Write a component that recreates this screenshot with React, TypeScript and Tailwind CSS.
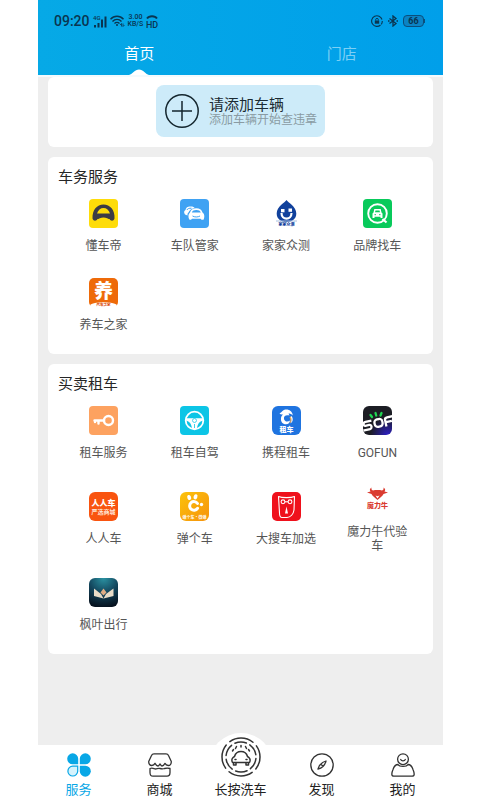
import type { ReactNode } from "react";

type Service = {
  name: string;
  icon: ReactNode;
};

type Tab = {
  name: string;
  icon: ReactNode;
};

const cjk = "'Noto Sans CJK SC', sans-serif";

function Tile(props: { fill: string; radius?: number; children: ReactNode }) {
  return (
    <svg viewBox="0 0 29 29" className="size-[29px] overflow-visible" aria-hidden="true">
      <rect width="29" height="29" rx={props.radius ?? 4} fill={props.fill} />
      {props.children}
    </svg>
  );
}

const carServices: Service[] = [
  {
    name: "懂车帝",
    icon: (
      <Tile fill="#fedc09">
        <path
          d="M3.500 19.500C3 11 8 5.500 14.500 5.500S26 11 25.500 19.500C24.500 22.500 21.500 22 20.500 20H8.500C7.500 22 4.500 22.500 3.500 19.500Z"
          fill="#3c3b45"
        />
        <path d="M8 14.500C9 11 11.500 9 14.500 9S20 11 21 14.500Z" fill="#fedc09" />
        <path d="M8.500 21C10 17.500 19 17.500 20.500 21Z" fill="#fedc09" />
      </Tile>
    ),
  },
  {
    name: "车队管家",
    icon: (
      <Tile fill="#3fa2f3">
        <path
          d="M5 15.500C3.500 13.500 4 11.500 5.500 11C6.500 7.500 8.500 7.500 11 7.500C13 7.500 14 8 14.500 9C11 9.500 9.500 11.500 8.500 13.500C7.500 14 7.500 15 7.500 16.500Z"
          fill="#fff"
        />
        <path d="M7 11C7.500 9.500 9 9.200 11.500 9.200" stroke="#3fa2f3" fill="none" />
        <path
          d="M10 13.500C11 10.500 13 9.300 16.300 9.300S21.500 10.500 22.500 13.500C25 15 24.500 19 23.500 20.800H21.500L20.500 19.800H12L11 20.800H9.500C8 18.500 8 15 10 13.500Z"
          fill="#fff"
        />
        <path d="M11.800 13.500C12.500 11.500 14 10.900 16.300 10.900S20 11.500 20.800 13.500Z" fill="#3fa2f3" />
        <path d="M12.500 17C14.500 18.300 18 18.300 20 17" stroke="#3fa2f3" fill="none" />
      </Tile>
    ),
  },
  {
    name: "家家众测",
    icon: (
      <Tile fill="#fff">
        <path
          d="M14.500 1C16 3.500 24.300 7.500 24.300 14.500C24.300 20 20 23 14.500 23S4.700 20 4.700 14.500C4.700 7.500 13 3.500 14.500 1Z"
          fill="#11419c"
        />
        <rect x="9" y="10" width="3.500" height="3.300" fill="#fff" />
        <rect x="16.500" y="9.500" width="3.500" height="3.300" fill="#fff" />
        <path d="M9.500 14C9.500 21.500 19.500 21.500 19.500 14" stroke="#fff" strokeWidth="2.200" fill="none" />
        <path d="M4 22H25" stroke="#a9bfe0" strokeWidth="1" />
        <text x="14.500" y="27" fontSize="4" fontWeight="900" fill="#11419c" textAnchor="middle" fontFamily={cjk}>
          家家众测
        </text>
      </Tile>
    ),
  },
  {
    name: "品牌找车",
    icon: (
      <Tile fill="#08ca5b">
        <circle cx="14.500" cy="14.500" r="9.300" stroke="#fff" strokeWidth="1.900" fill="none" />
        <path d="M19.500 20L23.500 23.500" stroke="#fff" strokeWidth="2.200" />
        <path
          d="M11.300 10H17.700L18.500 13.500L19.500 14.500V19H17.500V17.800H11.500V19H9.500V14.500L10.500 13.500Z"
          fill="#fff"
        />
        <path d="M12.500 11.500H16.500L17 13.300H12Z" fill="#08ca5b" />
        <path d="M11.500 15.700H13M16 15.700H17.500" stroke="#08ca5b" />
      </Tile>
    ),
  },
  {
    name: "养车之家",
    icon: (
      <Tile fill="#ee6a09" radius={5}>
        <path d="M1 29L1.500 26.500C7 23.500 22 23.500 27.500 26.500L28 29Z" fill="#fff" />
        <text x="14.500" y="20" fontSize="19" fontWeight="900" fill="#fff" textAnchor="middle" fontFamily={cjk}>
          养
        </text>
        <text x="14.500" y="28" fontSize="3.600" fontWeight="900" fill="#d9480a" textAnchor="middle" fontFamily={cjk}>
          汽车之家
        </text>
      </Tile>
    ),
  },
];

const rentalServices: Service[] = [
  {
    name: "租车服务",
    icon: (
      <Tile fill="#fda260">
        <circle cx="19.500" cy="14.500" r="4.500" stroke="#fff" strokeWidth="2.400" fill="none" />
        <path d="M15 14.500H5.500M6 14.500V16M9.500 14.500V17.500" stroke="#fff" strokeWidth="2.400" strokeLinecap="round" />
      </Tile>
    ),
  },
  {
    name: "租车自驾",
    icon: (
      <Tile fill="#0cc5e6">
        <circle cx="14.500" cy="14.500" r="8.800" stroke="#fff" strokeWidth="1.800" fill="none" />
        <path
          d="M6 12.300H23V14.500C19.500 15.500 17.500 17.500 17 23H12C11.500 17.500 9.500 15.500 6 14.500Z"
          fill="#fff"
        />
        <circle cx="14.500" cy="14.500" r="2" stroke="#0cc5e6" strokeWidth="0.700" fill="none" />
        <path d="M14.500 18V22" stroke="#0cc5e6" strokeWidth="0.800" />
      </Tile>
    ),
  },
  {
    name: "携程租车",
    icon: (
      <Tile fill="#1f74e0" radius={6}>
        <path
          d="M7.500 7.500C8.500 6.500 9.500 6.500 10 5.500C11 3.800 13.500 3.200 15.500 3.500C18.500 4 20.500 6 20.800 9.500C19.500 8 18 7.500 16.500 7.500L17.500 9.500C13.500 8.500 11.500 10.500 12 13C12.500 15.500 15.500 16.500 18 14.500C17.800 16.500 16.500 18.300 14 18.300C10.500 18.300 8.500 15.500 9 12C9.200 10.500 10 9.300 11 8.500C9.500 8.800 8.200 8.500 7.500 7.500Z"
          fill="#fff"
        />
        <path d="M18.500 10.500C20.500 12 20.500 15.500 17.500 17.500C18.500 15.500 18.800 13 17.500 11.500Z" fill="#f6a340" />
        <path d="M19.500 10C21.500 12.500 21 16 18.500 17.500C19.800 15.500 20 12.500 18.500 11Z" fill="#fff" />
        <text x="14.500" y="26" fontSize="7" fontWeight="900" fill="#fff" textAnchor="middle" fontFamily={cjk}>
          租车
        </text>
      </Tile>
    ),
  },
  {
    name: "GOFUN",
    icon: (
      <svg viewBox="0 0 29 29" className="size-[29px]" aria-hidden="true">
        <defs>
          <radialGradient id="gofun" cx="0.85" cy="1" r="0.6">
            <stop offset="0" stopColor="#2d1fc4" />
            <stop offset="1" stopColor="#1c1d24" />
          </radialGradient>
          <clipPath id="gofunTile">
            <rect width="29" height="29" rx="6" />
          </clipPath>
        </defs>
        <g clipPath="url(#gofunTile)">
          <rect width="29" height="29" fill="url(#gofun)" />
          <g stroke="#20d653" strokeWidth="2.300" strokeLinecap="round">
            <path d="M7.500 9L9 11M12.500 7L13.200 9.500M18.500 7L17.500 9.500" />
          </g>
          <g stroke="#fff" strokeWidth="2.300" fill="none" transform="rotate(-12 14 17)">
            <path d="M9 13.500H3C0 13.500 0 17.300 2 17.300H6C9 17.300 8 21.500 6 21.500H-1" />
            <rect x="11.500" y="13.500" width="8" height="7.500" rx="3" />
            <path d="M22.500 22.500V16C22.500 14 23.500 13.500 25 13.500H31M23 18H29" />
          </g>
        </g>
      </svg>
    ),
  },
  {
    name: "人人车",
    icon: (
      <Tile fill="#f9540f" radius={6}>
        <text x="14.500" y="13.500" fontSize="8" fontWeight="900" fill="#fff" textAnchor="middle" fontFamily={cjk}>
          人人车
        </text>
        <text x="14.500" y="21.500" fontSize="6" fontWeight="700" fill="#ffe7d8" textAnchor="middle" fontFamily={cjk}>
          严选商城
        </text>
      </Tile>
    ),
  },
  {
    name: "弹个车",
    icon: (
      <svg viewBox="0 0 29 29" className="size-[29px] overflow-visible" aria-hidden="true">
        <defs>
          <linearGradient id="tange" x1="0" y1="0" x2="1" y2="1">
            <stop offset="0" stopColor="#fcc30b" />
            <stop offset="1" stopColor="#f6920c" />
          </linearGradient>
        </defs>
        <rect width="29" height="29" rx="6" fill="url(#tange)" />
        <path
          d="M17.500 11.500A4.300 4.300 0 1 0 17.500 16.300"
          stroke="#fff"
          strokeWidth="3"
          strokeLinecap="round"
          fill="none"
        />
        <ellipse cx="9.200" cy="5.500" rx="1.900" ry="2.600" fill="#fff" transform="rotate(-20 9.200 5.500)" />
        <ellipse cx="15.500" cy="4.800" rx="1.900" ry="2.600" fill="#fff" transform="rotate(20 15.500 4.800)" />
        <circle cx="21.500" cy="12.500" r="1.700" fill="#fff" />
        <text x="14.500" y="26.500" fontSize="4" fontWeight="700" fill="#fff" textAnchor="middle" fontFamily={cjk}>
          弹个车·微弹
        </text>
      </svg>
    ),
  },
  {
    name: "大搜车加选",
    icon: (
      <Tile fill="#ef111c" radius={5}>
        <g stroke="#fff" fill="none" strokeWidth="1.100" strokeLinejoin="round">
          <path d="M6.500 4.500C10 6 19 6 22.500 4.500L22 18C21.500 22 18.500 25.500 15 25.500H10C8 25.500 7.500 23.500 7.500 21Z" />
          <circle cx="11" cy="9.800" r="1.900" />
          <circle cx="18" cy="9.800" r="1.900" />
          <path d="M13 9.800H16" />
        </g>
        <path d="M14.500 14.500L13 21.500H16Z" fill="#fff" />
      </Tile>
    ),
  },
  {
    name: "魔力牛代验车",
    icon: (
      <Tile fill="#fff">
        <path
          d="M8.500 2.500C8.200 4 8.500 5 10 5.500L12 5H17L19 5.500C20.500 5 20.800 4 20.500 2.500C22.500 3.500 22.500 5.500 21.500 6.500L25 7.500L20.500 9C19.500 11 17.500 12.500 14.500 15C11.500 12.500 9.500 11 8.500 9L4 7.500L7.500 6.500C6.500 5.500 6.500 3.500 8.500 2.500Z"
          fill="#da3b30"
        />
        <path d="M12.500 10.500L14.500 13.500L16.500 10.500L14.500 11.300Z" fill="#fff" />
        <text x="14.500" y="23" fontSize="7" fontWeight="900" fill="#da3b30" textAnchor="middle" fontFamily={cjk}>
          魔力牛
        </text>
      </Tile>
    ),
  },
  {
    name: "枫叶出行",
    icon: (
      <svg viewBox="0 0 29 29" className="size-[29px]" aria-hidden="true">
        <defs>
          <radialGradient id="maple" cx="0.5" cy="0" r="1">
            <stop offset="0" stopColor="#2b93a3" />
            <stop offset="0.5" stopColor="#14485f" />
            <stop offset="1" stopColor="#06121f" />
          </radialGradient>
        </defs>
        <rect width="29" height="29" rx="6" fill="url(#maple)" />
        <path d="M5 10.500L12 16L14.500 20.500L5 18Z" fill="#e9dcc8" />
        <path d="M24.500 10.500L17 16L14.500 20.500L24.500 18Z" fill="#e9dcc8" />
        <path d="M14.500 10.500L17.500 14.500L14.500 17.500L11.500 14.500Z" fill="#e0ad85" />
      </svg>
    ),
  },
];

const tabs: Tab[] = [
  {
    name: "服务",
    icon: (
      <svg viewBox="0 0 24 24" className="size-6" fill="#08a7e6" aria-hidden="true">
        <path d="M5.700 0.300A5.500 5.500 0 0 1 11.200 5.800V11.300H5.700A5.500 5.500 0 0 1 5.700 0.300Z" />
        <path d="M18.300 0.300A5.500 5.500 0 0 1 18.300 11.300H12.800V5.800A5.500 5.500 0 0 1 18.300 0.300Z" />
        <path d="M12.800 12.700H18.300A5.500 5.500 0 1 1 12.800 18.200Z" />
        <path
          d="M10.700 13.200V18.200A4.900 4.900 0 1 1 5.700 13.200Z"
          fill="#d5f3fd"
          stroke="#08a7e6"
          strokeWidth="1.200"
        />
      </svg>
    ),
  },
  {
    name: "商城",
    icon: (
      <svg
        viewBox="0 0 24 24"
        className="size-6"
        fill="none"
        stroke="#333"
        strokeWidth="1.300"
        strokeLinejoin="round"
        aria-hidden="true"
      >
        <path d="M6 0.800H18C19.300 0.800 20 1.300 20.500 2.500L23.300 8.500C23.300 11 22 12.500 20.300 12.500C18.500 12.500 17.500 11.500 17 10.300C16 12 15 13 14 13C13 13 12.500 11.500 12 11C11.500 11.500 11 13 10 13C9 13 8 12 7 10.300C6.500 11.500 5.500 12.500 3.700 12.500C2 12.500 0.700 11 0.700 8.500L3.500 2.500C4 1.300 4.700 0.800 6 0.800Z" />
        <path d="M2 15.500C5 14.500 6 16 7.500 16C9 16 10 15 12 15.500C14 16 15 16 16.500 15.500C18.500 15 20 15 22 15.500V19.500C22 22 21 23.200 19 23.200H5C3 23.200 2 22 2 19.500Z" />
      </svg>
    ),
  },
  {
    name: "长按洗车",
    icon: (
      <svg
        viewBox="0 0 40 40"
        className="size-10"
        fill="none"
        stroke="#333"
        strokeWidth="1.500"
        strokeLinecap="round"
        aria-hidden="true"
      >
        <circle cx="20" cy="20" r="19" pathLength="120" strokeDasharray="25 5" strokeDashoffset="12" />
        <circle cx="20" cy="20" r="15" pathLength="120" strokeDasharray="15 5" strokeDashoffset="-2" />
        <path d="M15.500 9.500L14.500 11.500M20 8.500V10M24.500 9.500L25.500 11.500M12.500 12.500L11.500 14M27.500 12.500L28.500 14" />
        <path
          d="M11.500 25.500H28.500C30 22.500 28.500 20.500 26.500 19.500C25.500 16 24 14.500 20 14.500S14.500 16 13.500 19.500C11.500 20.500 10 22.500 11.500 25.500ZM12.500 26V28H15V26M25 26V28H27.500V26"
          strokeLinejoin="round"
        />
        <path d="M14 22.500H15M25 22.500H26" />
      </svg>
    ),
  },
  {
    name: "发现",
    icon: (
      <svg viewBox="0 0 24 24" className="size-6" fill="none" stroke="#333" strokeWidth="1.300" aria-hidden="true">
        <circle cx="12" cy="12" r="11.200" />
        <path d="M16 8C15 12 13 15 8 16C9 12 11 9.500 16 8ZM11 11.500L13 13" strokeLinejoin="round" />
      </svg>
    ),
  },
  {
    name: "我的",
    icon: (
      <svg viewBox="0 0 24 24" className="size-6" fill="none" stroke="#333" strokeWidth="1.300" aria-hidden="true">
        <circle cx="12" cy="6.200" r="5.400" />
        <path d="M9.700 6.500C10.500 8.200 13.500 8.200 14.300 6.500" strokeLinecap="round" />
        <path
          d="M7 11.500C4 11.500 3 13.500 2 16.500C0.500 20 0 23.200 3 23.200H21C24 23.200 23.500 20 22 16.500C21 13.500 20 11.500 17 11.500C15.500 14 8.500 14 7 11.500Z"
          strokeLinejoin="round"
        />
      </svg>
    ),
  },
];

function StatusBar() {
  return (
    <div className="flex h-[42px] items-center justify-between pr-[18px] pl-4 font-[Roboto] text-[#0a3550]">
      <div className="flex items-center gap-[3px]">
        <span className="text-sm font-medium">09:20</span>
        <svg viewBox="0 0 14 13" className="h-[13px] w-[14px] overflow-visible" fill="currentColor" aria-hidden="true">
          <text x="0" y="5" fontSize="6" fontWeight="500" fontFamily="Roboto">
            4G
          </text>
          <rect x="1" y="10" width="2" height="2.500" />
          <rect x="4.500" y="8" width="2" height="4.500" />
          <rect x="8" y="4.500" width="2" height="8" />
          <rect x="11.500" y="1.500" width="2" height="11" />
        </svg>
        <svg
          viewBox="0 0 15 12"
          className="h-3 w-[15px]"
          fill="none"
          stroke="currentColor"
          strokeWidth="1.400"
          aria-hidden="true"
        >
          <path d="M0.500 4.300C4 0.300 10 0.300 13.500 4.300M2.500 6.500C5 3.700 9 3.700 11.500 6.500M4.500 8.500C6 7 8 7 9.500 8.500" />
          <circle cx="7" cy="10" r="1" fill="currentColor" stroke="none" />
          <path d="M10 10L11.500 8.500V11.500M14.500 10L13 11.500V8.500" strokeWidth="0.800" />
        </svg>
        <div className="flex flex-col text-center text-[7px] leading-[7px] font-medium">
          <span>3.00</span>
          <span>KB/S</span>
        </div>
        <svg viewBox="0 0 12 13" className="h-[13px] w-3 overflow-visible" fill="currentColor" aria-hidden="true">
          <path d="M1 3.500C3 0.500 9 0.500 11 3.500" stroke="currentColor" strokeWidth="1.800" fill="none" />
          <text x="6" y="12.500" fontSize="9" fontWeight="500" textAnchor="middle" fontFamily="Roboto">
            HD
          </text>
        </svg>
      </div>
      <div className="flex items-center gap-[5px]">
        <svg viewBox="0 0 12 12" className="size-3" fill="none" stroke="currentColor" aria-hidden="true">
          <path d="M9.500 10A5.300 5.300 0 1 1 11 4.500M11.300 6C11.300 7.500 11 8.500 10.300 9.300" strokeWidth="1.100" />
          <rect x="3.800" y="5.500" width="4.400" height="3.200" fill="currentColor" stroke="none" />
          <path d="M4.700 5.500V4.500C4.700 3 7.300 3 7.300 4.500V5.500" />
        </svg>
        <svg
          viewBox="0 0 10 12"
          className="h-3 w-[10px]"
          fill="none"
          stroke="currentColor"
          strokeWidth="1.300"
          aria-hidden="true"
        >
          <path d="M1.500 3.500L8 8.500L5 11V1L8 3.500L1.500 8.500" />
          <path d="M0 6H1.500M8.500 6H10" />
        </svg>
        <div className="flex items-center">
          <span className="h-3 w-[21px] rounded-sm border border-[#0a4f7c] bg-[#0b83c4] text-center text-[9px] leading-[10px] font-bold">
            66
          </span>
          <span className="h-1 w-px bg-[#0a4f7c]" />
        </div>
      </div>
    </div>
  );
}

function ServiceCard(props: { title: string; services: Service[]; rowGap: string }) {
  return (
    <section className="rounded-md bg-white p-[10px]">
      <h2 className="text-[15px] leading-5 text-[#262626]">{props.title}</h2>
      <ul className={`grid auto-rows-[78px] grid-cols-4 ${props.rowGap}`}>
        {props.services.map((service) => (
          <li key={service.name} className="flex">
            <a href="#" className="flex flex-1 flex-col items-center justify-center gap-[11px]">
              {service.icon}
              <span className="max-w-16 text-center text-xs leading-[14px] text-[#555]">{service.name}</span>
            </a>
          </li>
        ))}
      </ul>
    </section>
  );
}

export default function App() {
  return (
    <div className="min-h-screen bg-white pr-[37px] pl-[38px] font-[Roboto,'Noto_Sans_CJK_SC',sans-serif]">
      <div className="flex min-h-screen flex-col bg-[#eee]">
        <header className="h-[75px] bg-linear-to-r from-[#06a9e6] to-[#009fea]">
          <StatusBar />
          <nav className="grid h-[33px] grid-cols-2 text-[15px]">
            <a href="#" className="flex flex-col items-center justify-between pt-[2px] text-white">
              <span className="leading-5">首页</span>
              <svg viewBox="0 0 20 6" className="h-[6px] w-5" fill="#fff" aria-hidden="true">
                <path d="M0 6C3 5.500 6 0.500 10 0.500S17 5.500 20 6Z" />
              </svg>
            </a>
            <a href="#" className="flex justify-center pt-[2px] text-[#7dd0f5]">
              <span className="leading-5">门店</span>
            </a>
          </nav>
        </header>

        <main className="flex flex-1 flex-col gap-[10px] border-t-2 border-[#f4fafd] px-[10px] pb-4">
          <section className="flex justify-center rounded-md bg-white pt-2 pb-[10px]">
            <button
              type="button"
              className="flex items-center gap-[10px] rounded-lg bg-[#cdebf9] py-[9px] pr-[8px] pl-[9px] text-left"
            >
              <svg
                viewBox="0 0 34 34"
                className="size-[34px]"
                fill="none"
                stroke="#14262e"
                strokeWidth="1.500"
                aria-hidden="true"
              >
                <circle cx="17" cy="17" r="16.200" />
                <path d="M17 7V27M7 17H27" />
              </svg>
              <span className="flex flex-col pt-1">
                <span className="text-[15px] leading-[15px] text-[#1c2b33]">请添加车辆</span>
                <span className="text-xs leading-[15px] text-[#8a9ba3]">添加车辆开始查违章</span>
              </span>
            </button>
          </section>
          <ServiceCard title="车务服务" services={carServices} rowGap="gap-y-px" />
          <ServiceCard title="买卖租车" services={rentalServices} rowGap="gap-y-2" />
        </main>

        <nav className="grid grid-cols-5 grid-rows-[55px] bg-white text-[13px] text-[#222]">
          {tabs.map((tab, i) => (
            <a
              key={tab.name}
              href="#"
              className={`relative flex flex-col items-center justify-end gap-[5px] pb-[2px] ${i === 0 ? "text-[#08a7e6]" : ""}`}
            >
              {i === 2 && <span className="absolute -top-3 size-16 rounded-full bg-white" />}
              <span className="relative">{tab.icon}</span>
              <span className="relative leading-4">{tab.name}</span>
            </a>
          ))}
        </nav>
      </div>
    </div>
  );
}
